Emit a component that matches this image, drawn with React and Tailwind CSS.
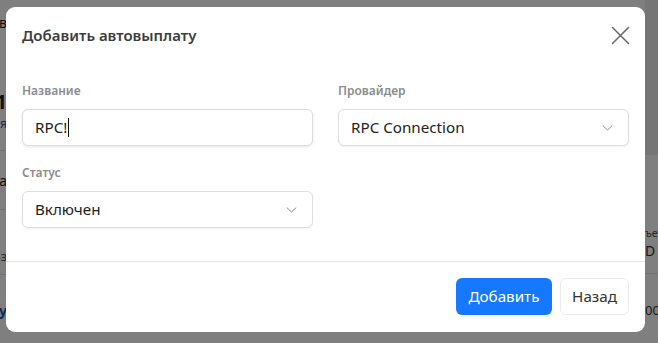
import React from "react";

function Chevron() {
  return (
    <svg width="11" height="6" viewBox="0 0 11 6" fill="none" className="shrink-0">
      <path d="M1 0.75 L5.5 5 L10 0.75" stroke="#8c8c8c" strokeWidth="1" strokeLinecap="round" strokeLinejoin="round" />
    </svg>
  );
}

function Field({ label, children }) {
  return (
    <div className="flex flex-col">
      <div className="mb-2 h-5 text-[12px] leading-5 font-semibold text-[#8c8c8c]">{label}</div>
      {children}
    </div>
  );
}

function SelectBox({ value }) {
  return (
    <div className="flex h-[37px] items-center justify-between rounded-md border border-[#dedede] bg-white pl-3 pr-[15px] shadow-[0_1px_2px_rgba(0,0,0,0.06)]">
      <span className="text-[15.2px] text-[#222]">{value}</span>
      <Chevron />
    </div>
  );
}

function Backdrop() {
  return (
    <div className="flex h-full w-full justify-between bg-white text-[#1f1f1f]">
      <div className="flex w-[7px] flex-col items-end overflow-hidden whitespace-nowrap">
        <div className="mt-[13px] text-[14px] leading-5">Итого в</div>
        <div className="mt-[57px] text-[20px] leading-6 font-bold">1</div>
        <div className="mt-[2px] text-[12px] leading-4 text-[#1a56c4]">Основная</div>
        <div className="mt-[18px] h-px w-full bg-[#e5e5e5]" />
        <div className="mt-[20px] text-[14px] leading-5">Сумма</div>
        <div className="mt-[18px] h-px w-full bg-[#e5e5e5]" />
        <div className="mt-[36px] text-[13px] leading-5 text-[#555]">Вз</div>
        <div className="mt-[8px] h-px w-full bg-[#e5e5e5]" />
        <div className="mt-[26px] text-[14px] leading-5 font-bold text-[#1a56c4]">Ру</div>
      </div>
      <div className="flex w-[13px] flex-col overflow-hidden whitespace-nowrap">
        <div className="h-[155px] w-full bg-[#ececec]" />
        <div className="mt-[70px] text-[11px] leading-4 text-[#555]">ъем</div>
        <div className="text-[14px] leading-5 text-[#333]">D</div>
        <div className="mt-[12px] h-px w-full bg-[#e5e5e5]" />
        <div className="mt-[26px] text-[13px] leading-5 text-[#333]">00</div>
      </div>
    </div>
  );
}

export default function App() {
  return (
    <div className="relative h-[343px] w-[658px] overflow-hidden font-['Noto_Sans',sans-serif]">
      <Backdrop />
      <div className="absolute inset-0 bg-black/50 pl-[6px] pt-[7px]">
        <div className="flex h-[325px] w-[639px] flex-col rounded-[9px] bg-white">
          <div className="flex h-[41px] items-end justify-between px-4">
            <h2 className="h-[25px] text-[15px] leading-6 font-semibold text-[#3d3d3d]">Добавить автовыплату</h2>
            <button className="mb-[3px] mr-[-1px] text-[#6b6b6b]">
              <svg width="19" height="19" viewBox="0 0 19 19" fill="none">
                <path d="M1.5 1.5 L17.5 17.5 M17.5 1.5 L1.5 17.5" stroke="currentColor" strokeWidth="1.6" strokeLinecap="round" />
              </svg>
            </button>
          </div>

          <div className="grid grid-cols-2 gap-x-[25px] gap-y-[17px] px-4 pb-[33px] pt-[33px]">
            <Field label="Название">
              <div className="flex h-[37px] items-center rounded-md border border-[#dcdcdc] bg-white px-3 shadow-[0_1px_3px_rgba(0,0,0,0.1)]">
                <span className="text-[15.2px] text-[#222]">RPC!</span>
                <span className="ml-px h-[19px] w-px bg-[#111]" />
              </div>
            </Field>
            <Field label="Провайдер">
              <SelectBox value="RPC Connection" />
            </Field>
            <Field label="Статус">
              <SelectBox value="Включен" />
            </Field>
          </div>

          <div className="flex justify-end gap-2 border-t border-[#e3e3e3] px-4 pb-4 pt-4">
            <button className="h-[37px] w-[96px] rounded-md bg-[#1677ff] text-[15.2px] text-white">Добавить</button>
            <button className="h-[37px] w-[69px] rounded-md border border-[#ececec] bg-white text-[15.2px] text-[#333]">Назад</button>
          </div>
        </div>
      </div>
    </div>
  );
}
